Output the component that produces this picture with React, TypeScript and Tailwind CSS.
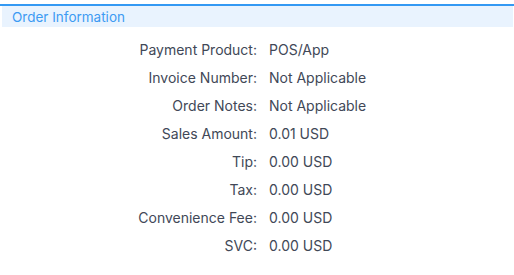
const ROWS: [string, string][] = [
  ["Payment Product", "POS/App"],
  ["Invoice Number", "Not Applicable"],
  ["Order Notes", "Not Applicable"],
  ["Sales Amount", "0.01 USD"],
  ["Tip", "0.00 USD"],
  ["Tax", "0.00 USD"],
  ["Convenience Fee", "0.00 USD"],
  ["SVC", "0.00 USD"],
];

export default function App() {
  return (
    <div className="min-h-screen bg-white pt-1 font-['Inter','Liberation_Sans',sans-serif]">
      <section>
        <div className="border-t-2 border-[#3399f3] pl-0.5 pr-px">
          <h2 className="h-[21px] bg-[#e9f3fe] pl-2.5 pt-px text-[13.5px] leading-[21px] text-[#3d9bf3]">
            Order Information
          </h2>
        </div>

        <dl className="mt-[9px] grid grid-cols-[257px_1fr] text-sm text-[#414857]">
          {ROWS.map(([label, value]) => (
            <div key={label} className="contents">
              <dt className="h-7 text-right leading-7">{label}:</dt>
              <dd className="h-7 pl-3 leading-7">{value}</dd>
            </div>
          ))}
        </dl>
      </section>
    </div>
  );
}
